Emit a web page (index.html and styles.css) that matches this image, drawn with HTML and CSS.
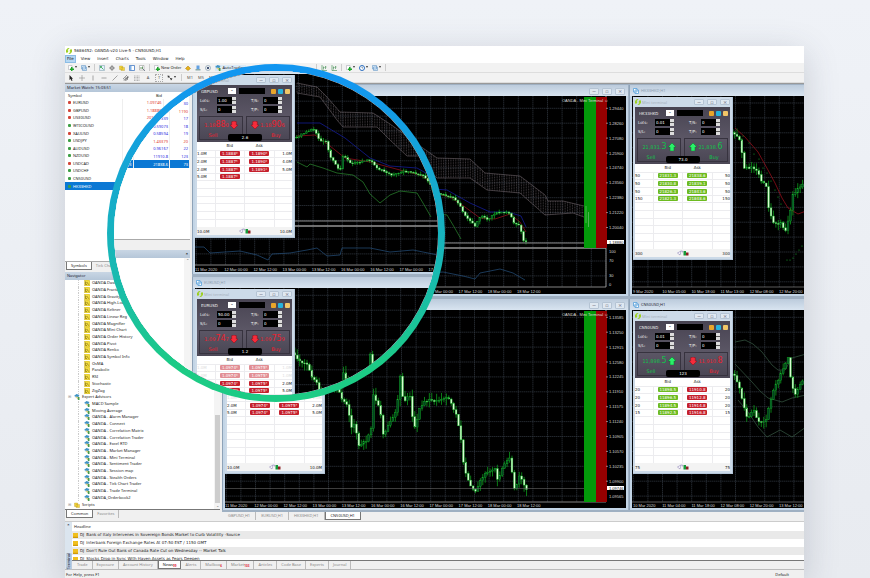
FILE: index.html
```html
<!DOCTYPE html>
<html lang="en">
<head>
<meta charset="utf-8">
<title>OANDA-v20 Live-5 - CN50USD,H1</title>
<link rel="stylesheet" href="styles.css">
</head>
<body>
<svg class="sprite" aria-hidden="true">
  <symbol id="i-logo" viewBox="0 0 12 12"><path d="M6 0a6 6 0 0 0-4 10.500L5 6 3 4l4-3zM6 12a6 6 0 0 0 4-10.500L7 6l2 2-4 3z" fill="#9bcf1c"/></symbol>
  <symbol id="i-add" viewBox="0 0 12 12"><path d="M1 1h7v8H1z" fill="#fff" stroke="#889" stroke-width=".8"/><path d="M4 7h2V4h3v3h3v3H9v2H6v-2H4z" fill="#1fa52b"/></symbol>
  <symbol id="i-wins" viewBox="0 0 12 12"><path d="M1 1h8v7H1zM3 4h8v7H3z" fill="#dcecfa" stroke="#4d86bd"/></symbol>
  <symbol id="i-arrows" viewBox="0 0 12 12"><path d="M1 1h10v10H1z" fill="#e3f0fb" stroke="#79a"/><path d="M3 3l6 6M3 3v3M3 3h3" stroke="#1d9a3a" stroke-width="1.400" fill="none"/></symbol>
  <symbol id="i-target" viewBox="0 0 12 12"><circle cx="6" cy="6" r="3.500" fill="none" stroke="#555"/><path d="M6 0v12M0 6h12" stroke="#555"/></symbol>
  <symbol id="i-folder" viewBox="0 0 12 12"><path d="M1 2h6l1 2h-1v5H1zM4 5h7v6H4z" fill="#f5d63c" stroke="#b29420" stroke-width=".7"/></symbol>
  <symbol id="i-panel" viewBox="0 0 12 12"><path d="M1 1h10v10H1z" fill="#fff" stroke="#3b74c0" stroke-width="1.500"/><path d="M2 2h3v8H2z" fill="#7eb1ea"/></symbol>
  <symbol id="i-report" viewBox="0 0 12 12"><path d="M1 1h9v9H1z" fill="#fff" stroke="#888"/><path d="M3 8V4h2v4zM6 8V3h2v5z" fill="#6c9a6c"/><path d="M8 8l4 4" stroke="#567" stroke-width="1.500"/></symbol>
  <symbol id="i-gold" viewBox="0 0 12 12"><path d="M1 7l5-5 5 5-5 4z" fill="#e8b21b" stroke="#a57705"/></symbol>
  <symbol id="i-user" viewBox="0 0 12 12"><path d="M1 8h10v3H1z" fill="#8aa"/><path d="M3 1h6v7H3z" fill="#61a0e2"/></symbol>
  <symbol id="i-signal" viewBox="0 0 12 12"><circle cx="6" cy="6" r="5" fill="none" stroke="#8ba0b0" stroke-width="1.500"/><path d="M4 4h4v4H4z" fill="#457"/></symbol>
  <symbol id="i-bars" viewBox="0 0 12 12"><path d="M2 0v11h10M5 3v6M9 2v6M5 5h2M9 4h2" fill="none" stroke="#3a8a4a" stroke-width="1.200"/></symbol>
  <symbol id="i-clock" viewBox="0 0 12 12"><circle cx="6" cy="6" r="5" fill="#fff" stroke="#2a6ec0" stroke-width="2"/><path d="M6 3v3h2" stroke="#246" fill="none"/></symbol>
  <symbol id="i-cursor" viewBox="0 0 12 12"><path d="M3 0v10l2.500-2L7 12l2-1-1.500-3.500H10z" fill="#222"/></symbol>
  <symbol id="i-cross" viewBox="0 0 12 12"><path d="M6 0v12M0 6h12" stroke="#777"/></symbol>
  <symbol id="i-vline" viewBox="0 0 12 12"><path d="M6 1v10" stroke="#555"/></symbol>
  <symbol id="i-hline" viewBox="0 0 12 12"><path d="M1 6h10" stroke="#555"/></symbol>
  <symbol id="i-trend" viewBox="0 0 12 12"><path d="M1 11L11 1" stroke="#555"/></symbol>
  <symbol id="i-channel" viewBox="0 0 12 12"><path d="M0 8l8-8M3 12l9-9M1 10l10-6M6 12V4M9 10V2" stroke="#444"/></symbol>
  <symbol id="i-fibo" viewBox="0 0 12 12"><path d="M0 2h11M0 5h11M0 8h11M0 11h11" stroke="#777" stroke-dasharray="2 1"/></symbol>
  <symbol id="i-marks" viewBox="0 0 12 12"><path d="M1 1l5 1-4 4zM6 6l5 1-3 4z" fill="#333"/><path d="M3 3l6 6" stroke="#333"/></symbol>
  <symbol id="i-indicator" viewBox="0 0 12 12"><path d="M1 0h9l2 2v10H1z" fill="#f2dc3f" stroke="#b39a1c" stroke-width=".7"/><path d="M3 3v6h3M5 6c2-4 2 3 5 3" stroke="#57470a" fill="none"/></symbol>
  <symbol id="i-expert" viewBox="0 0 12 12"><path d="M0 4l5-4 6 2-2 3 1 3H4L3 5z" fill="#3f93c6"/><path d="M6 6h5v6H8z" fill="#4a9a4b"/><path d="M4 5l4 1-1 3-3-1z" fill="#e8d384"/></symbol>
  <symbol id="i-news" viewBox="0 0 12 12"><path d="M0 0h12v12H0z" fill="#f0bf1e"/><path d="M0 9h12v3H0z" fill="#cf9a0a"/></symbol>
  <symbol id="i-chart" viewBox="0 0 12 12"><path d="M1 1h7v7H1zM4 4h7v7H4z" fill="#fff" stroke="#4d9bd8" stroke-width="1.500"/></symbol>
  <symbol id="i-up" viewBox="0 0 12 12"><path d="M6 0l6 6H9v6H3V6H0z" fill="#2bf06a" stroke="#087a2a" stroke-width=".8"/></symbol>
  <symbol id="i-down" viewBox="0 0 12 12"><path d="M6 12L0 6h2.500V1L6 0l3.500 1v5H12z" fill="#f62c3b" stroke="#8e0d1a" stroke-width=".8"/></symbol>
  <symbol id="i-foot" viewBox="0 0 24 12"><path d="M1 6l7-4-2 8zM8 2h3v3" fill="#fff" stroke="#7a6dad"/><path d="M13 2h5v9h-5z" fill="#16983a"/><path d="M18 5h5v6h-5z" fill="#8d1f22"/></symbol>
</svg>

<main class="stage">
  <div class="app" id="app">
    <header class="titlebar"><svg class="ico"><use href="#i-logo"/></svg><span>5686452: OANDA-v20 Live-5 - CN50USD,H1</span></header>
    <nav class="menu">
      <button class="on">File</button><button>View</button><button>Insert</button><button>Charts</button><button>Tools</button><button>Window</button><button>Help</button>
    </nav>
    <div class="toolbar">
      <button class="drop"><svg class="ico"><use href="#i-add"/></svg></button>
      <button class="drop"><svg class="ico"><use href="#i-wins"/></svg></button>
      <i class="sep"></i>
      <button><svg class="ico"><use href="#i-arrows"/></svg></button>
      <button><svg class="ico"><use href="#i-target"/></svg></button>
      <button><svg class="ico"><use href="#i-folder"/></svg></button>
      <button><svg class="ico"><use href="#i-panel"/></svg></button>
      <button><svg class="ico"><use href="#i-report"/></svg></button>
      <i class="sep"></i>
      <button class="wide"><svg class="ico"><use href="#i-add"/></svg>New Order</button>
      <button><svg class="ico"><use href="#i-gold"/></svg></button>
      <button><svg class="ico"><use href="#i-user"/></svg></button>
      <button><svg class="ico"><use href="#i-signal"/></svg></button>
      <button class="wide auto"><svg class="ico"><use href="#i-expert"/></svg>AutoTrading</button>
      <div class="tools-right">
        <i class="sep"></i>
        <button><svg class="ico"><use href="#i-bars"/></svg></button>
        <button><svg class="ico"><use href="#i-bars"/></svg></button>
        <i class="sep"></i>
        <button class="drop"><svg class="ico"><use href="#i-add"/></svg></button>
        <button class="drop"><svg class="ico"><use href="#i-clock"/></svg></button>
        <button class="drop"><svg class="ico"><use href="#i-wins"/></svg></button>
        <i class="sep"></i>
      </div>
    </div>
    <div class="toolbar second">
      <button><svg class="ico"><use href="#i-cursor"/></svg></button>
      <button><svg class="ico"><use href="#i-cross"/></svg></button>
      <button><svg class="ico"><use href="#i-vline"/></svg></button>
      <button><svg class="ico"><use href="#i-hline"/></svg></button>
      <button><svg class="ico"><use href="#i-trend"/></svg></button>
      <button><svg class="ico"><use href="#i-channel"/></svg></button>
      <button><svg class="ico"><use href="#i-fibo"/></svg></button>
      <button>A</button>
      <button class="boxed">T</button>
      <button class="drop"><svg class="ico"><use href="#i-marks"/></svg></button>
      <i class="sep"></i>
      <button>M1</button><button>M5</button><button>M15</button><button>M30</button>
    </div>

    <div class="body">
      <aside class="side">
        <h2 class="bar">Market Watch: 15:03:51</h2>
        <div class="watch">
          <table>
            <thead><tr><th>Symbol</th><th>Bid</th><th>Ask</th><th>!</th></tr></thead>
            <tbody id="quotes"></tbody>
          </table>
        </div>
        <div class="tabs"><button class="on">Symbols</button><button>Tick Chart</button></div>
        <h2 class="bar">Navigator<span>×</span></h2>
        <div class="nav">
          <ul class="tree" id="tree"></ul>
          <div class="scroll"><span>⌃</span><i></i><span>⌄</span></div>
        </div>
        <div class="tabs"><button class="on">Common</button><button>Favorites</button></div>
      </aside>
      <section class="work">
        <div class="windows" id="windows"></div>
        <div class="tabs chart-tabs"><button>GBPUSD,H1</button><button>EURUSD,H1</button><button>HK33HKD,H1</button><button class="on">CN50USD,H1</button></div>
      </section>
    </div>

    <section class="terminal">
      <div class="grip"><b>×</b><span>Terminal</span></div>
      <div class="news">
        <h3>Headline</h3>
        <ul>
          <li><svg class="ico"><use href="#i-news"/></svg><b>DJ</b>Bank of Italy Intervenes in Sovereign Bonds Market to Curb Volatility -Source</li>
          <li><svg class="ico"><use href="#i-news"/></svg><b>DJ</b>Interbank Foreign Exchange Rates At 07:50 EST / 1150 GMT</li>
          <li><svg class="ico"><use href="#i-news"/></svg><b>DJ</b>Don't Rule Out Bank of Canada Rate Cut on Wednesday -- Market Talk</li>
          <li><svg class="ico"><use href="#i-news"/></svg><b>DJ</b>Stocks Drop in Sync With Haven Assets as Fears Deepen</li>
        </ul>
        <div class="tabs term-tabs"><button>Trade</button><button>Exposure</button><button>Account History</button><button class="on">News<sub>99</sub></button><button>Alerts</button><button>Mailbox<sub>6</sub></button><button>Market<sub>103</sub></button><button>Articles</button><button>Code Base</button><button>Experts</button><button>Journal</button></div>
      </div>
    </section>
    <footer class="status"><span>For Help, press F1</span><span>Default</span></footer>
  </div>
  <div class="lens"><div class="glass" id="glass" aria-hidden="true" inert></div></div>
</main>
<script src="app.js"></script>
</body>
</html>
```
FILE: styles.css
```css
* { box-sizing: border-box; }
body { margin: 0; background: #edf0f5; font-family: "Noto Sans", sans-serif; font-size: 4px; line-height: 6px; color: #222; }
button, input, select { font: inherit; color: inherit; margin: 0; padding: 0; border: 0; border-radius: 0; background: none; appearance: none; }
h2, h3, ul { margin: 0; padding: 0; font: inherit; list-style: none; }
.sprite { position: absolute; width: 0; height: 0; }
.ico { width: 6px; height: 6px; flex: none; display: block; }
.stage { position: relative; min-height: 100vh; overflow: hidden; padding: 46px 66px 0 65px; background: linear-gradient(#eff2f7, #e8ebf0); }
.app { background: #f0f0f0; box-shadow: 0 8px 32px rgba(60, 70, 90, .22); }

.titlebar { display: flex; align-items: center; gap: 2px; height: 9px; padding-left: 1px; background: #fff; }
.menu { display: flex; gap: 1px; height: 8px; background: #fff; }
.titlebar, .menu, .news li { font-family: "DejaVu Sans", sans-serif; }
.menu button { padding: 0 2px; margin-right: 2px; }
.menu .on { background: #b5d7f3; outline: 1px solid #8cbde6; outline-offset: -1px; }
.toolbar { display: flex; align-items: center; gap: 4px; height: 10px; padding-left: 3px; border-bottom: 1px solid #ddd; background: #f2f2f2; }
.toolbar button { min-width: 6px; display: flex; align-items: center; gap: 1px; }
.toolbar .drop::after { content: ""; border: 1px solid transparent; border-top: 2px solid #333; }
.toolbar .auto { background: #dbeaf6; }
.toolbar .sep { width: 1px; height: 7px; background: #ccc; }
.tools-right { display: flex; align-items: center; gap: 4px; margin-left: 66px; }
.toolbar.second { gap: 5px; color: #555; }
.boxed { outline: 1px dotted #aaa; }
.toolbar.second button { justify-content: center; }

.body { display: grid; grid-template-columns: 155px minmax(0, 1fr); gap: 2px; border-top: 1px solid #999; }
.side { display: flex; flex-direction: column; background: #f0f0f0; }
.bar { height: 8px; line-height: 7px; padding: 0 2px; display: flex; justify-content: space-between; background: linear-gradient(#c9d6e4, #b5c6d8); color: #223; }
.bar span { font-weight: bold; color: #000; }
.watch { height: 170px; background: #fff; border: 1px solid #aaa; border-width: 0 0 1px; }
.watch table { width: 100%; height: 98px; table-layout: fixed; border-collapse: collapse; line-height: 5px; }
.watch th { font-weight: normal; text-align: right; padding: 0 1px; height: 7px; }
.watch th:nth-child(1) { text-align: left; width: 57px; padding-left: 3px; }
.watch th:nth-child(2) { width: 41px; }
.watch th:nth-child(4) { width: 20px; }
.watch td { padding: 0 1px; text-align: right; border-right: 1px solid #eee; color: #2a2ae0; }
.watch td:first-child { text-align: left; color: #222; padding-left: 3px; white-space: nowrap; }
.watch td:first-child::before { content: ""; display: inline-block; width: 3px; height: 3px; margin-right: 2px; border-radius: 1px; background: #3c9f45; }
.watch .dn td:first-child::before { background: #d2453a; }
.watch .red td + td { color: #e0392c; }
.watch .sel td, .watch .sel td:first-child { background: #0b78d4; color: #fff; }
.tabs { display: flex; height: 10px; padding-left: 1px; color: #888; }
.tabs button { padding: 0 4px; height: 8px; position: relative; border-right: 1px solid #bbb; }
.tabs .on { background: #fff; color: #222; border: 1px solid #777; border-top: 0; }
.nav { display: flex; height: 230px; background: #fff; border-bottom: 1px solid #777; }
.tree { flex: 1; height: 228px; display: flex; flex-direction: column; padding-left: 11px; }
.tree li { flex: 1; min-height: 0; display: flex; align-items: center; gap: 2px; margin-left: 2px; padding-left: 5px; border-left: 1px dotted #ccc; white-space: nowrap; }
.tree .root { padding: 0; margin-left: -8px; border: 0; }
.tree .root::before { content: "⊞"; margin-right: 1px; color: #999; }
.scroll { width: 6px; display: flex; flex-direction: column; align-items: center; background: #f4f4f4; color: #666; }
.scroll i { width: 5px; height: 88px; margin-top: auto; background: #cdcdcd; }

.work { min-width: 0; display: flex; flex-direction: column; background: #9fb0c2; }
.windows { display: grid; grid-template-columns: minmax(0, 1fr) 175px; gap: 3px 1px; padding: 1px 0 2px; }
.win { min-width: 0; overflow: hidden; position: relative; padding: 0 2px 2px; background: #c3d5e6; border-left: 1px solid #8fa3b8; }
.win header { height: 11px; display: flex; align-items: center; gap: 2px; padding: 1px 3px 0; color: #8d9db0; background: linear-gradient(#bccbdc, #d8e4f0); margin: 0 -2px; }
.win.active header { color: #223; }
.win.right { padding-right: 0; }
.caps { margin-left: auto; display: flex; gap: 3px; }
.caps i { width: 10px; height: 7px; border: 1px solid #b5c4d4; border-radius: 1px; font: 5px/5px "DejaVu Sans", sans-serif; text-align: center; color: #667; background: #dfe8f1; }
.right header .caps { display: none; }
.plot { display: block; width: 100%; height: 198px; background: #000; font: 4px "Liberation Sans", sans-serif; }

.mini { position: absolute; left: 2px; top: 12px; width: 100px; padding: 0 2px 2px; background: #ccdae8; border: 1px solid #b3c5d7; border-width: 0 1px 1px 0; font: 4px/5px "DejaVu Sans", sans-serif; color: #222; }
.right .mini { left: 3px; }
.mini .cap { height: 10px; display: flex; align-items: center; gap: 1px; color: #a3afbb; font-family: "Noto Sans", sans-serif; }
.mini .caps i { height: 6px; line-height: 4px; }
.deck { height: 57px; position: relative; padding: 3px 2px 2px; display: flex; flex-direction: column; gap: 3px; background: linear-gradient(#484452, #5d5867 60%, #4c4856); color: #eee; }
.pick { display: flex; align-items: center; gap: 2px; height: 6px; padding-left: 2px; }
.pick label { position: relative; width: 35px; height: 6px; margin-right: 1px; }
.pick select { width: 100%; height: 6px; display: block; }
.pick label::after { content: "⌄"; position: absolute; right: 0; top: 0; width: 8px; height: 6px; line-height: 4px; text-align: center; font-weight: bold; color: #222; background: #fff; pointer-events: none; }
.pick input { width: 26px; height: 6px; background: #000; margin-right: auto; }
.pick button { width: 5px; height: 5px; border-radius: 1px; background: #e8a52a; }
.pick button:nth-of-type(2) { background: #25b3dd; }
.pick button:nth-of-type(3) { background: #f1c667; }
.orders { display: grid; grid-template-columns: 36px 31px; gap: 2px 15px; height: 16px; padding-left: 1px; }
.orders label { display: flex; justify-content: space-between; align-items: center; height: 7px; }
.orders input { width: 15px; height: 7px; padding-left: 1px; margin-left: auto; background: #000; color: #fff; }
.orders i { width: 4px; height: 7px; background: linear-gradient(#ddd 3px, #555 3px 4px, #ddd 4px); }
.deal { display: grid; grid-template-columns: 1fr 1fr; gap: 3px; height: 24px; }
.deal button { display: grid; grid-template-rows: 15px 7px; border: 1px solid #37333f; background: linear-gradient(#5b5665, #4b4755); text-align: center; }
.deal .q { display: flex; align-items: center; justify-content: center; gap: 1px; font-size: 5px; line-height: 8px; }
.deal .q b { font-size: 8px; font-weight: normal; }
.deal .ico { width: 8px; height: 8px; }
.deal .buy .q { flex-direction: row-reverse; }
.deal .dn { color: #ea1f2e; }
.deal .up { color: #12c04c; }
.deal em { font-style: normal; font-size: 5px; line-height: 6px; }
.deal .sell em { margin-right: 16px; }
.deal .buy em { margin-left: 16px; }
.spread { position: absolute; left: 31px; bottom: 1px; width: 34px; height: 7px; line-height: 7px; text-align: center; border-radius: 2px; background: #000; color: #fff; }
.mini table { width: 100%; height: 85px; border-collapse: collapse; table-layout: fixed; background: #fff; }
.mini tr { height: 7px; }
.mini th { font-weight: normal; padding: 0; height: 8px; }
.mini td { padding: 0; height: 7px; border: 1px solid #ececef; border-width: 1px 1px 0 0; text-align: center; line-height: 5px; }
.mini th:first-child, .mini th:last-child { width: 18px; }
.mini td:first-child { text-align: left; }
.mini td:last-child { text-align: right; border-right: 0; }
.mini td b { display: block; width: 20px; height: 5px; margin: 0 auto; border-radius: 1px; font-weight: normal; color: #fff; background: #c5202c; white-space: nowrap; }
.mini td b.up { background: #6dbb20; }
.mini .dim b { opacity: .5; }
.mini .dim td:first-child, .mini .dim td:last-child { color: #ddd; }
.mini footer { height: 8px; display: flex; justify-content: space-between; align-items: center; background: #f3f3f3; }
.mini footer .ico { width: 12px; }

.chart-tabs { height: 9px; padding-left: 1px; background: #f0f0f0; }
.chart-tabs button { padding: 0 5px; }
.terminal { display: flex; height: 48px; border-top: 1px solid #ccc; background: #f0f0f0; }
.grip { width: 7px; display: flex; flex-direction: column; align-items: center; justify-content: space-between; background: #dbe5ef; color: #223; }
.grip span { writing-mode: vertical-rl; transform: rotate(180deg); background: #b9cbe0; }
.news { flex: 1; min-width: 0; display: flex; flex-direction: column; background: #fff; }
.news h3 { height: 9px; line-height: 9px; padding-left: 2px; }
.news ul { height: 30px; overflow: hidden; border-bottom: 1px solid #777; }
.news li { height: 8px; display: flex; align-items: center; gap: 2px; padding-left: 1px; }
.news li:nth-child(odd) { background: #e9e9e9; }
.news li b { font-weight: normal; }
.news .ico { width: 5px; height: 5px; }
.term-tabs { flex: 1; background: #f0f0f0; }
.term-tabs sub { color: #e02030; font-weight: bold; font-size: 3px; line-height: 3px; vertical-align: bottom; }
.status { height: 9px; display: flex; justify-content: space-between; align-items: center; padding: 2px 15px 0 1px; border-top: 1px solid #bbb; }

.lens { position: absolute; left: 107px; top: 64px; width: 338px; height: 338px; padding: 7px; border-radius: 50%; background: linear-gradient(#1296f0 5%, #16a9cf 35%, #18b9b3 60%, #1ccb85 90%); }
.glass { position: relative; width: 324px; height: 324px; border-radius: 50%; overflow: hidden; background: #fff; }
.glass .app { position: absolute; left: -79px; top: -47px; width: calc(100vw - 131px); box-shadow: none; }
```
FILE: app.js
```js
const quotes = [
  ['EURUSD', '1.09746', '1.09758', '12', 'dn red'], ['GBPUSD', '1.18880', '1.18906', '26', 'dn red'],
  ['US30USD', '20115.9', '20118.9', '30', 'dn red'], ['WTICOUSD', '26.073', '26.103', '30', ''],
  ['XAUUSD', '1500.19', '1501.38', '1190', 'dn red'], ['USDJPY', '107.322', '107.339', '17', ''],
  ['AUDUSD', '0.59055', '0.59073', '18', ''], ['NZDUSD', '0.58575', '0.58594', '19', ''],
  ['USDCAD', '1.43359', '1.43379', '20', 'dn red'], ['USDCHF', '0.96145', '0.96167', '22', ''],
  ['CN50USD', '11898.5', '11910.8', '123', ''], ['HK33HKD', '21831.3', '21838.6', '73', 'sel']
];
document.getElementById('quotes').innerHTML = quotes.map(q =>
  `<tr class="${q[4]}"><td>${q[0]}</td><td>${q[1]}</td><td>${q[2]}</td><td>${q[3]}</td></tr>`).join('');

const indicators = ['OANDA Dashboard', 'OANDA Fractals', 'OANDA Gravity', 'OANDA High-Low', 'OANDA Keltner', 'OANDA Linear Reg', 'OANDA Magnifier',
  'OANDA Mini Chart', 'OANDA Order History', 'OANDA Pivot', 'OANDA Renko', 'OANDA Symbol Info', 'OsMA', 'Parabolic', 'RSI', 'Stochastic', 'ZigZag'];
const experts = ['MACD Sample', 'Moving Average', 'OANDA - Alarm Manager', 'OANDA - Connect', 'OANDA - Correlation Matrix',
  'OANDA - Correlation Trader', 'OANDA - Excel RTD', 'OANDA - Market Manager', 'OANDA - Mini Terminal', 'OANDA - Sentiment Trader',
  'OANDA - Session map', 'OANDA - Stealth Orders', 'OANDA - Tick Chart Trader', 'OANDA - Trade Terminal', 'OANDA_Orderbook2'];
const icon = n => `<svg class="ico"><use href="#i-${n}"/></svg>`;
const node = (n, i, c = '') => `<li class="${c}">${icon(i)}${n}</li>`;
document.getElementById('tree').innerHTML = indicators.map(n => node(n, 'indicator')).join('') +
  node('Expert Advisors', 'expert', 'root') + experts.map(n => node(n, 'expert')).join('') + node('Scripts', 'folder', 'root');

const caps = '<span class="caps"><i>−</i><i>▫</i><i>×</i></span>';

function mini(m) {
  const rows = Array.from({ length: 10 }, (_, i) => {
    const r = m.rows[i];
    if (!r) return '<tr><td></td><td></td><td></td><td></td></tr>';
    const tag = (v, c) => v ? `<b class="${c}">${v}</b>` : '';
    return `<tr class="${r[3] || ''}"><td>${r[0]}</td><td>${tag(r[1], m.sell[2])}</td><td>${tag(r[2], m.buy[2])}</td><td>${r[2] ? r[4] || r[0] : ''}</td></tr>`;
  }).join('');
  const side = (name, cls, p) => `<button class="${cls} ${p[2]}"><span class="q"><span>${p[0]}<b>${p[1]}</b></span>${icon(p[2] === 'up' ? 'up' : 'down')}</span><em>${name}</em></button>`;
  const field = (l, v) => `<label>${l}<input value="${v}"><i></i></label>`;
  return `<div class="mini"><div class="cap">${icon('logo')}Mini terminal${caps}</div>
    <div class="deck">
      <div class="pick"><label><select aria-label="Symbol"><option>${m.name}</option></select></label><input aria-label="Comment"><button aria-label="Link"></button><button aria-label="Settings"></button><button aria-label="Menu"></button></div>
      <div class="orders">${field('Lots:', m.lots)}${field('T/S:', 0)}${field('S/L:', 0)}${field('T/P:', 0)}</div>
      <div class="deal">${side('Sell', 'sell', m.sell)}${side('Buy', 'buy', m.buy)}</div>
      <div class="spread">${m.spread}</div>
    </div>
    <table><thead><tr><th></th><th>Bid</th><th>Ask</th><th></th></tr></thead><tbody>${rows}</tbody></table>
    <footer><span>${m.total}</span>${icon('foot')}<span>${m.total}</span></footer></div>`;
}

const line = (pts, color, extra = '') => `<polyline points="${pts.join(' ')}" fill="none" stroke="${color}" stroke-width=".7" ${extra}/>`;

function at(pts, x) {
  for (let i = 2; i < pts.length; i += 2) {
    if (x <= pts[i]) {
      const t = (x - pts[i - 2]) / (pts[i] - pts[i - 2]);
      return pts[i - 1] + t * (pts[i + 1] - pts[i - 1]);
    }
  }
  return pts[pts.length - 1];
}

function candles(pts, wick, seed) {
  let s = seed, out = '';
  const rnd = () => (s = (s * 16807) % 2147483647) / 2147483647;
  const end = pts[pts.length - 2];
  let open = pts[1];
  for (let x = pts[0]; x <= end; x += 2.43) {
    const close = at(pts, x) + (rnd() - .5) * wick * .5;
    const top = Math.min(open, close), h = Math.max(.8, Math.abs(close - open));
    const down = close > open;
    out += `<path d="M${x} ${top - rnd() * wick}V${top + h + rnd() * wick}" stroke="#0c9c1c" stroke-width=".8"/>` +
      `<rect x="${x - .9}" y="${top}" width="1.8" height="${h}" fill="${down ? '#d8ffd2' : '#042'}" stroke="#17b32a" stroke-width=".4"/>`;
    open = close;
  }
  return out;
}

function grid(x0, x1, gx, y0, y1, gy) {
  let d = '';
  for (let x = gx; x < x1; x += 14.6) if (x > x0) d += `M${x} ${y0}V${y1}`;
  for (let y = gy; y < y1; y += 14.9) d += `M${x0} ${y}H${x1}`;
  return `<path d="${d}" stroke="#39424b" stroke-width=".6" stroke-dasharray="1.5 .5"/>`;
}

const text = (x, y, t, fill = '#ddd') => `<text x="${x}" y="${y}" fill="${fill}">${t}</text>`;
const times = (x, y, list) => list.map((t, i) => text(x + i * 29.2, y, t)).join('');
const scale = (y, list) => list.map((t, i) => `<path d="M606 ${y + i * 14.9}h2" stroke="#ccc" stroke-width=".6"/>` + text(609, y + 1.5 + i * 14.9, t)).join('');
const dots = pts => pts.map(p => `<circle cx="${p[0]}" cy="${p[1]}" r=".6" fill="#18a52c"/>`).join('');
const zones = (y, h) => `<path d="M584 ${y}h12v${h}h-12z" fill="#039a0a"/><path d="M596 ${y}h11v${h}h-11z" fill="#960000"/>`;

function cloud(top, bottom) {
  let d = '';
  for (let x = 327; x < 585; x += 2.43) d += `M${x} ${at(top, x)}V${at(bottom, x)}`;
  return `<g opacity=".65"><path d="${d}" stroke="#9b8d95" stroke-width=".6" stroke-dasharray="1 .6"/>` + line(top, '#8d7f86') + line(bottom, '#8d7f86') + '</g>';
}

const gbp = [300, 166, 327, 159, 343, 150, 350, 163, 357, 163, 359, 177, 363, 182, 370, 193, 373, 177, 382, 186, 400, 182, 407, 190, 422, 197, 433, 193, 445, 195,
  453, 198, 460, 205, 463, 213, 470, 221, 475, 226, 481, 215, 488, 220, 495, 213, 502, 212, 510, 213, 514, 223, 520, 226, 523, 240, 527, 242];
const eur = [320, 372, 328, 380, 337, 387, 342, 398, 348, 407, 351, 427, 355, 423, 358, 445, 365, 443, 372, 427, 373, 392, 380, 410, 383, 435, 392, 420, 397, 410,
  400, 376, 403, 400, 410, 397, 414, 430, 420, 407, 430, 398, 437, 402, 448, 397, 455, 411, 460, 430, 463, 462, 468, 481, 475, 491, 482, 477, 495, 468, 498, 480, 505, 463, 510, 458, 514, 490, 520, 475, 525, 487, 527, 488];
const hk = [720, 124, 735, 133, 741, 142, 743, 170, 750, 167, 758, 173, 762, 183, 767, 187, 769, 213, 775, 225, 782, 223, 785, 234, 790, 213, 792, 197, 797, 190, 806, 180];
const cn = [720, 366, 735, 377, 740, 390, 747, 418, 753, 410, 758, 420, 765, 423, 768, 412, 772, 395, 778, 380, 788, 358, 791, 382, 795, 395, 802, 382, 806, 378];

const cloudTop = [327, 105, 347, 109, 357, 119, 370, 134, 403, 135, 420, 146, 437, 158, 470, 159, 485, 173, 520, 176, 545, 195, 548, 201, 563, 201, 584, 206];
const cloudBottom = [327, 115, 350, 119, 367, 142, 373, 149, 407, 149, 420, 162, 437, 178, 470, 178, 487, 190, 520, 193, 545, 215, 573, 213, 584, 217];

const charts = [
  { title: 'GBPUSD,H1', ox: 225, oy: 96, cls: '',
    art: grid(224, 606, 226.3, 96, 248, 108.3) + grid(224, 606, 226.3, 249, 287, 261) + cloud(cloudTop, cloudBottom) +
      line([327, 184, 337, 189, 340, 186, 353, 190, 367, 195, 383, 197, 393, 204, 400, 216, 410, 225, 420, 217, 430, 213, 447, 215, 453, 225, 461, 239], '#2b8a2f') +
      line([327, 158, 345, 157, 360, 168, 375, 180, 400, 184, 430, 192, 450, 197, 465, 207, 480, 218, 495, 219, 510, 214, 520, 222, 526, 232], '#a01320') +
      line([327, 145, 350, 145, 375, 160, 400, 180, 420, 188, 447, 190, 470, 203, 490, 212, 508, 212, 521, 216, 526, 227], '#1620a8') +
      candles(gbp, 3, 77) +
      '<path d="M224 243H606" stroke="#8a8a8a"/><path d="M224 248H606" stroke="#ddd"/><path d="M224 287H606V96" fill="none" stroke="#bbb" stroke-width=".7"/>' +
      line([225, 269, 234, 269, 240, 275, 270, 273, 287, 277, 298, 282, 302, 276, 320, 275, 337, 272, 347, 270, 357, 278, 370, 277, 372, 270, 400, 270, 420, 274, 443, 272, 463, 276, 475, 279, 480, 273, 500, 269, 513, 273, 525, 280], '#25507c') +
      zones(97, 151) + '<path d="M586 206v17M588.500 212v15" stroke="#9c9" stroke-width=".5"/>' + text(562, 101.5, 'OANDA - Mini Terminal ☺') +
      scale(108.3, ['1.29440', '1.28260', '1.27080', '1.25900', '1.24740', '1.23560', '1.22380', '1.21220', '1.20040']) +
      '<path d="M607 240h17v4h-17z" fill="#fff"/>' + text(609, 243.5, '1.18880', '#111') + text(609, 253, '100') + text(609, 262, '70') + text(609, 277, '30') + text(609, 286, '0') +
      times(225, 292.5, ['11 Mar 2020', '12 Mar 00:00', '12 Mar 12:00', '13 Mar 00:00', '13 Mar 12:00', '16 Mar 00:00', '16 Mar 12:00', '17 Mar 00:00', '17 Mar 12:00', '18 Mar 00:00', '18 Mar 12:00']),
    mini: { name: 'GBPUSD', lots: '1.00', sell: ['1.18', '88₀', 'dn'], buy: ['1.18', '90₆', 'dn'], spread: '2.6', total: '10.0M',
      rows: [['1.0M', '1.1888⁰', '1.1890⁶'], ['2.0M', '1.1887⁵', '1.1890⁹', '', '4.0M'], ['2.0M', '1.1887⁴', '1.1891²', '', '5.0M'], ['5.0M', '1.1887⁰', '']] } },
  { title: 'HK33HKD,H1', ox: 632, oy: 96, cls: 'right',
    art: grid(632, 820, 633.3, 96, 287, 103) +
      line([735, 128, 745, 137, 758, 152, 768, 170, 775, 183, 782, 198, 788, 208, 798, 214, 806, 211], '#a3101c') + candles(hk, 6, 991) +
      dots([[737, 129], [743, 136], [749, 143], [754, 154], [759, 159], [763, 168], [767, 173], [771, 181], [775, 190], [778, 197], [781, 204], [787, 260], [790, 260], [793, 258], [796, 254], [799, 250], [802, 246]]) +
      '<path d="M632 287H820" stroke="#999" stroke-width=".6"/>' +
      times(633, 292.5, ['9 Mar 2020', '10 Mar 05:00', '10 Mar 18:00', '11 Mar 13:00', '12 Mar 08:00', '12 Mar 20:00']),
    mini: { name: 'HK33HKD', lots: '0.01', sell: ['21,831.', '3', 'up'], buy: ['21,838.', '6', 'up'], spread: '73.0', total: '300',
      rows: [['50', '21831.3', '21838.6'], ['50', '21830.8', '21839.1'], ['50', '21826.3', '21843.6'], ['150', '21821.3', '21848.6']] } },
  { title: 'EURUSD,H1', ox: 225, oy: 310, cls: '',
    art: grid(224, 606, 226.3, 310, 502, 317.3) + candles(eur, 7, 4242) +
      '<path d="M224 488.500H606" stroke="#666" stroke-width=".6"/><path d="M224 502H606V310" fill="none" stroke="#bbb" stroke-width=".7"/>' +
      zones(311, 191) + text(562, 315.5, 'OANDA - Mini Terminal ☺') +
      scale(317.3, ['1.13585', '1.13250', '1.12915', '1.12580', '1.12245', '1.11910', '1.11575', '1.11240', '1.10905', '1.10570', '1.10235', '1.09900']) +
      text(609, 497.5, '1.09565') + '<path d="M607 486h17v4h-17z" fill="#fff"/>' + text(609, 489.5, '1.09746', '#111') +
      times(225, 506.5, ['11 Mar 2020', '12 Mar 00:00', '12 Mar 12:00', '13 Mar 00:00', '13 Mar 12:00', '16 Mar 00:00', '16 Mar 12:00', '17 Mar 00:00', '17 Mar 12:00', '18 Mar 00:00', '18 Mar 12:00']),
    mini: { name: 'EURUSD', lots: '50.00', sell: ['1.09', '74₇', 'dn'], buy: ['1.09', '75₉', 'dn'], spread: '1.2', total: '10.0M',
      rows: [['1.0M', '1.0974⁸', '1.0975⁵', 'dim'], ['1.0M', '1.0974⁹', '1.0975⁷', 'dim'], ['2.0M', '1.0974⁷', '1.0975⁷'], ['5.0M', '1.0974⁷', '1.0975⁹']] } },
  { title: 'CN50USD,H1', ox: 632, oy: 310, cls: 'right active',
    art: grid(632, 820, 633.3, 310, 502, 317.3) +
      line([735, 342, 745, 340, 753, 344, 762, 352, 772, 365, 778, 370, 785, 370, 792, 358, 806, 354], '#385a45') +
      line([735, 364, 752, 382, 760, 391, 768, 398, 782, 402, 792, 398, 806, 395], '#385a45') +
      line([738, 400, 748, 412, 758, 427, 767, 437, 780, 430, 792, 437, 806, 427], '#385a45') + candles(cn, 6, 31337) +
      '<path d="M632 502H820" stroke="#999" stroke-width=".6"/>' +
      times(633, 506.5, ['10 Mar 2020', '11 Mar 04:00', '11 Mar 18:00', '12 Mar 08:00', '12 Mar 20:00', '13 Mar 12:00']),
    mini: { name: 'CN50USD', lots: '0.01', sell: ['11,898.', '5', 'up'], buy: ['11,910.', '8', 'dn'], spread: '123', total: '75',
      rows: [['20', '11898.5', '11910.8'], ['20', '11896.5', '11912.8'], ['20', '11894.5', '11914.8'], ['15', '11892.5', '11916.8']] } }
];

document.getElementById('windows').innerHTML = charts.map(c =>
  `<article class="win ${c.cls}"><header>${icon('chart')}${c.title}${caps}</header>
  <svg class="plot"><g transform="translate(${-c.ox} ${-c.oy})">${c.art}</g></svg>${mini(c.mini)}</article>`).join('');

const copy = document.getElementById('app').cloneNode(true);
copy.removeAttribute('id');
copy.querySelectorAll('[id]').forEach(e => e.removeAttribute('id'));
document.getElementById('glass').append(copy);
```
